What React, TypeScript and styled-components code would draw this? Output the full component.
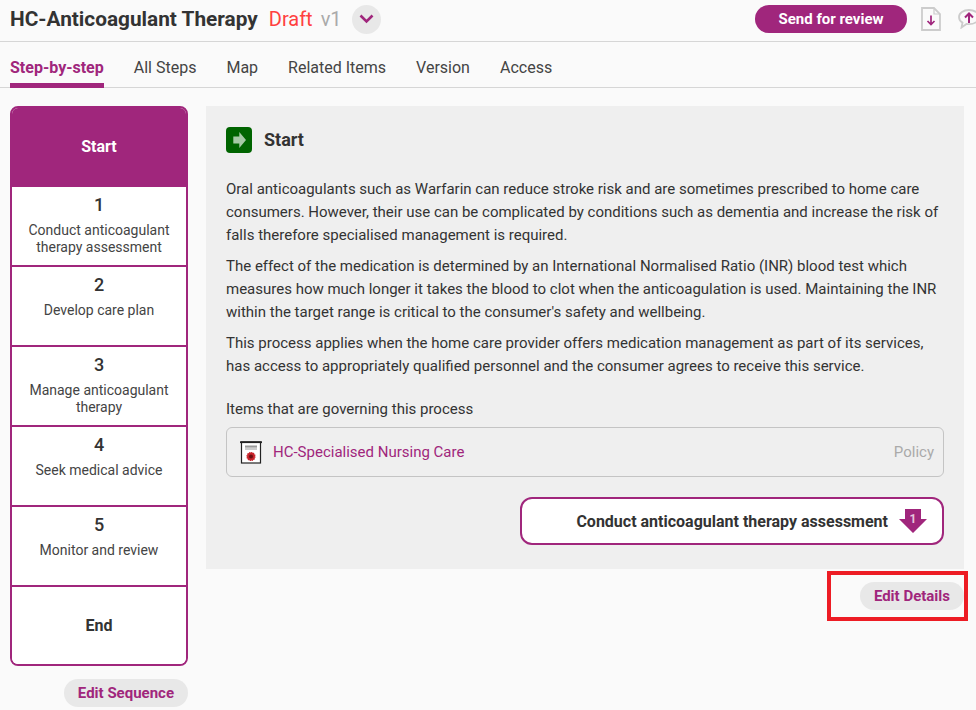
import React from 'react';
import styled, { createGlobalStyle } from 'styled-components';

const GlobalStyle = createGlobalStyle`
  html, body {
    margin: 0;
    padding: 0;
    background: #fafafa;
    overflow: hidden;
  }
  body {
    font-family: Roboto, "Liberation Sans", sans-serif;
    color: #333;
  }
`;

const PURPLE = '#a0267c';

const Page = styled.div`
  position: relative;
  width: 976px;
  height: 710px;
  overflow: hidden;
`;

const Header = styled.header`
  display: flex;
  align-items: center;
  height: 42px;
  padding: 0 0 3px 10px;
  box-sizing: border-box;
  border-bottom: 1px solid #d6d6d6;
`;

const Title = styled.h1`
  margin: 0;
  font-size: 20.8px;
  line-height: 38px;
  font-weight: 700;
  color: #333;
  white-space: nowrap;
`;

const Status = styled.span`
  margin-left: 11px;
  font-size: 20px;
  color: #ff4040;
`;

const Version = styled.span`
  margin-left: 8px;
  font-size: 20px;
  color: #aaa;
`;

const RoundToggle = styled.button`
  display: flex;
  align-items: center;
  justify-content: center;
  width: 29px;
  height: 29px;
  margin-left: 10px;
  padding: 0;
  border: 0;
  border-radius: 50%;
  background: #e8e8e8;
`;

const HeaderActions = styled.div`
  display: flex;
  align-items: center;
  margin-left: auto;
  flex: none;
  width: 221px;
  overflow: hidden;
`;

const PrimaryButton = styled.button`
  flex: none;
  width: 152px;
  height: 28px;
  margin-right: 14px;
  padding: 0;
  border: 0;
  border-radius: 14px;
  background: ${PURPLE};
  color: #fff;
  font: 700 15px Roboto, sans-serif;
`;

const DownloadGlyph = styled.svg`
  flex: none;
  margin-right: 17px;
`;

const CommentGlyph = styled.svg`
  flex: none;
`;

const Tabs = styled.nav`
  display: flex;
  gap: 30px;
  height: 46px;
  padding-left: 10px;
  box-sizing: border-box;
  border-bottom: 1px solid #d6d6d6;
`;

const Tab = styled.div<{ $active?: boolean }>`
  height: 46px;
  box-sizing: border-box;
  padding-top: 16px;
  font-size: 16px;
  line-height: 20px;
  font-weight: ${p => (p.$active ? 700 : 400)};
  color: ${p => (p.$active ? PURPLE : '#444')};
  border-bottom: ${p => (p.$active ? `5px solid ${PURPLE}` : '0')};
`;

const Body = styled.div`
  display: flex;
  gap: 18px;
  padding: 18px 12px 0 10px;
`;

const SideColumn = styled.aside`
  display: flex;
  flex-direction: column;
  align-items: flex-end;
  width: 178px;
  flex: none;
`;

const Sequence = styled.ol`
  list-style: none;
  width: 100%;
  margin: 0;
  padding: 0;
  box-sizing: border-box;
  border: 2px solid ${PURPLE};
  border-radius: 8px;
  overflow: hidden;
  background: #fff;
`;

const SeqItem = styled.li<{ $active?: boolean; $number?: boolean }>`
  display: flex;
  flex-direction: column;
  align-items: center;
  justify-content: ${p => (p.$number ? 'flex-start' : 'center')};
  height: 80px;
  box-sizing: border-box;
  text-align: center;
  background: ${p => (p.$active ? PURPLE : '#fff')};
  color: ${p => (p.$active ? '#fff' : '#333')};
  border-bottom: 2px solid ${PURPLE};
  &:first-child {
    height: 79px;
    padding-bottom: 3px;
    border-bottom: 0;
  }
  &:last-child {
    height: 77px;
    border-bottom: 0;
  }
`;

const SeqLabel = styled.span`
  font-size: 16px;
  font-weight: 700;
`;

const SeqNumber = styled.span`
  margin-top: 6px;
  font-size: 18px;
  line-height: 24px;
  font-weight: 500;
  color: #333;
`;

const SeqText = styled.span`
  margin-top: 5px;
  padding: 0 8px;
  font-size: 14px;
  line-height: 17px;
  color: #444;
`;

const GreyButton = styled.button`
  display: block;
  height: 28px;
  padding: 0 14px;
  border: 0;
  border-radius: 14px;
  background: #e8e8e8;
  color: ${PURPLE};
  font: 700 15px Roboto, sans-serif;
  white-space: nowrap;
`;

const SequenceEdit = styled(GreyButton)`
  margin-top: 13px;
`;

const MainColumn = styled.main`
  display: flex;
  flex-direction: column;
  align-items: flex-end;
  flex: 1;
  min-width: 0;
`;

const Panel = styled.section`
  width: 100%;
  height: 463px;
  box-sizing: border-box;
  padding: 20px 20px 0;
  background: #efefef;
`;

const PanelTitleRow = styled.div`
  display: flex;
  align-items: center;
  gap: 12px;
  height: 27px;
  margin-bottom: 25px;
`;

const PanelTitle = styled.h2`
  margin: 0;
  font-size: 18px;
  font-weight: 700;
  color: #333;
`;

const Para = styled.p`
  margin: 0 0 8px;
  font-size: 15px;
  line-height: 23px;
  color: #333;
`;

const GoverningLabel = styled.div`
  margin-top: 20px;
  font-size: 15px;
  line-height: 23px;
  color: #333;
`;

const GoverningCard = styled.div`
  display: flex;
  align-items: center;
  gap: 11px;
  height: 50px;
  margin-top: 6px;
  padding: 0 9px 0 13px;
  box-sizing: border-box;
  border: 1px solid #c4c4c4;
  border-radius: 6px;
`;

const GoverningLink = styled.a`
  font-size: 15px;
  color: ${PURPLE};
`;

const GoverningType = styled.span`
  margin-left: auto;
  font-size: 15px;
  color: #aaa;
`;

const NextRow = styled.div`
  display: flex;
  justify-content: flex-end;
  margin-top: 20px;
`;

const NextButton = styled.button`
  display: flex;
  align-items: center;
  justify-content: flex-end;
  gap: 11px;
  width: 424px;
  height: 48px;
  padding: 0 15px 0 0;
  box-sizing: border-box;
  border: 2px solid ${PURPLE};
  border-radius: 12px;
  background: #fff;
  color: #333;
  font: 700 16px Roboto, sans-serif;
`;

const DetailsEdit = styled(GreyButton)`
  margin-top: 13px;
`;

const Highlight = styled.div`
  position: absolute;
  left: 827px;
  top: 571px;
  width: 141px;
  height: 50px;
  box-sizing: border-box;
  border: 4px solid #ed1c24;
  pointer-events: none;
`;

const Chevron = () => (
  <svg width="15" height="10" viewBox="0 0 15 10" fill="none">
    <path d="M1.5 1.5 7.5 7.5 13.5 1.5" stroke={PURPLE} strokeWidth="2.6" />
  </svg>
);

const DownloadIcon = () => (
  <DownloadGlyph width="20" height="24" viewBox="0 0 20 24" fill="none">
    <path d="M1 1H13L19 7V23H1Z" fill="#fafafa" stroke="#ccc" strokeWidth="1.8" />
    <path d="M13 1V7H19" stroke="#ccc" strokeWidth="1.2" />
    <path d="M10 8.5V17.5M6.5 14 10 17.5 13.5 14" stroke={PURPLE} strokeWidth="1.7" />
  </DownloadGlyph>
);

const CommentIcon = () => (
  <CommentGlyph width="22" height="20" viewBox="0 0 22 20" fill="none">
    <path d="M11 1C5.5 1 1 3.8 1 8C1 10.8 2.4 12.4 4.5 13.6L3.5 18.5L8.5 15C9.3 15.1 10.2 15.2 11 15.2C17 15.2 21 12 21 8C21 3.8 16.5 1 11 1Z" fill="#fafafa" stroke="#ccc" strokeWidth="1.8" />
    <path d="M11 14V4.5M7 8.5 11 4.5 15 8.5" stroke={PURPLE} strokeWidth="2" />
  </CommentGlyph>
);

const StartIcon = () => (
  <svg width="26" height="26" viewBox="0 0 26 26">
    <rect width="26" height="26" rx="4" fill="#006400" />
    <path d="M7.3 9.5H13.3V5L20 13 13.3 21V16.5H7.3Z" fill="#a6c9a6" />
  </svg>
);

const PolicyIcon = () => (
  <svg width="22" height="23" viewBox="0 0 22 23" style={{ flex: 'none' }}>
    <rect x="1.5" y="1" width="19" height="21" fill="#fff" stroke="#222" strokeWidth="1.2" />
    <path d="M0 1.2H22" stroke="#222" strokeWidth="1.8" />
    <rect x="5" y="4.5" width="12" height="2.2" fill="#999" />
    <rect x="5" y="6.7" width="12" height="2.3" fill="#ccc" />
    <circle cx="11" cy="15.5" r="3.9" fill="#c8252c" stroke="#c8252c" strokeWidth="1.4" strokeDasharray="1.2 0.8" />
    <circle cx="11" cy="15.5" r="2" fill="#6d0f12" />
  </svg>
);

const StepArrowIcon = () => (
  <svg width="28" height="24" viewBox="0 0 28 24" style={{ flex: 'none' }}>
    <path d="M6 0H22V10H28L14 24 0 10H6Z" fill={PURPLE} />
    <text x="14" y="14" textAnchor="middle" fontSize="12" fontWeight="700" fill="#e6c5dc" fontFamily="Roboto, sans-serif">1</text>
  </svg>
);

const tabs = ['Step-by-step', 'All Steps', 'Map', 'Related Items', 'Version', 'Access'];

const steps = [
  { n: 1, text: 'Conduct anticoagulant therapy assessment' },
  { n: 2, text: 'Develop care plan' },
  { n: 3, text: 'Manage anticoagulant therapy' },
  { n: 4, text: 'Seek medical advice' },
  { n: 5, text: 'Monitor and review' },
];

const paragraphs = [
  "Oral anticoagulants such as Warfarin can reduce stroke risk and are sometimes prescribed to home care consumers. However, their use can be complicated by conditions such as dementia and increase the risk of falls therefore specialised management is required.",
  "The effect of the medication is determined by an International Normalised Ratio (INR) blood test which measures how much longer it takes the blood to clot when the anticoagulation is used. Maintaining the INR within the target range is critical to the consumer's safety and wellbeing.",
  "This process applies when the home care provider offers medication management as part of its services, has access to appropriately qualified personnel and the consumer agrees to receive this service.",
];

export default function App() {
  return (
    <Page>
      <GlobalStyle />
      <Header>
        <Title>HC-Anticoagulant Therapy</Title>
        <Status>Draft</Status>
        <Version>v1</Version>
        <RoundToggle><Chevron /></RoundToggle>
        <HeaderActions>
          <PrimaryButton>Send for review</PrimaryButton>
          <DownloadIcon />
          <CommentIcon />
        </HeaderActions>
      </Header>
      <Tabs>
        {tabs.map((t, i) => (
          <Tab key={t} $active={i === 0}>{t}</Tab>
        ))}
      </Tabs>
      <Body>
        <SideColumn>
          <Sequence>
            <SeqItem $active><SeqLabel>Start</SeqLabel></SeqItem>
            {steps.map(s => (
              <SeqItem key={s.n} $number>
                <SeqNumber>{s.n}</SeqNumber>
                <SeqText>{s.text}</SeqText>
              </SeqItem>
            ))}
            <SeqItem><SeqLabel>End</SeqLabel></SeqItem>
          </Sequence>
          <SequenceEdit>Edit Sequence</SequenceEdit>
        </SideColumn>
        <MainColumn>
          <Panel>
            <PanelTitleRow>
              <StartIcon />
              <PanelTitle>Start</PanelTitle>
            </PanelTitleRow>
            {paragraphs.map(p => (
              <Para key={p.slice(0, 12)}>{p}</Para>
            ))}
            <GoverningLabel>Items that are governing this process</GoverningLabel>
            <GoverningCard>
              <PolicyIcon />
              <GoverningLink>HC-Specialised Nursing Care</GoverningLink>
              <GoverningType>Policy</GoverningType>
            </GoverningCard>
            <NextRow>
              <NextButton>
                Conduct anticoagulant therapy assessment
                <StepArrowIcon />
              </NextButton>
            </NextRow>
          </Panel>
          <DetailsEdit>Edit Details</DetailsEdit>
        </MainColumn>
      </Body>
      <Highlight />
    </Page>
  );
}
